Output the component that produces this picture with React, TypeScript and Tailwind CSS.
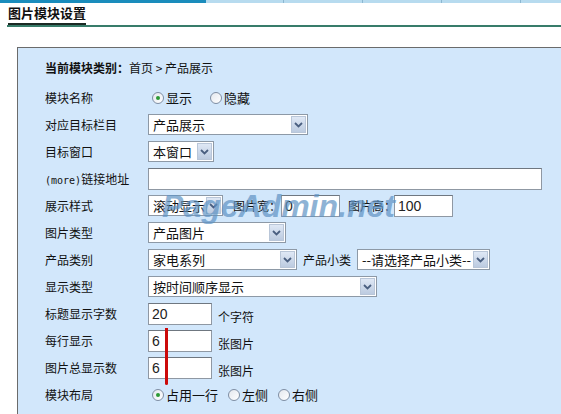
import type { ReactNode } from "react";

const cjk = "font-['Noto_Sans_CJK_SC',sans-serif]";

function Chevron() {
    return (
        <svg width="9" height="6" viewBox="0 0 9 6">
            <path d="M1 1l3.5 3.5L8 1" fill="none" stroke="#4a5f80" strokeWidth="1.8" />
        </svg>
    );
}

function Select({ width, value }: { width: number; value?: string }) {
    return (
        <div
            className="flex h-[21px] shrink-0 items-stretch border border-[#8d99a6] bg-white"
            style={{ width }}
        >
            <span className="flex-1 truncate pl-[4px] text-[13px] leading-[19px] text-[#111]">{value}</span>
            <span className="m-[1px] flex w-[15px] items-center justify-center border border-[#b9c6d8] bg-gradient-to-b from-[#dfe8f5] to-[#bccbe0]">
                <Chevron />
            </span>
        </div>
    );
}

function TextBox({ width, value }: { width: number; value?: string }) {
    return (
        <div
            className="h-[22px] shrink-0 border border-[#8f98a3] border-t-[#6f7780] bg-white pl-[3px] font-['Liberation_Sans',sans-serif] text-[14px] leading-[20px] text-[#222]"
            style={{ width }}
        >
            {value}
        </div>
    );
}

function Radio({ checked, label, className = "" }: { checked?: boolean; label: string; className?: string }) {
    return (
        <span className={`flex shrink-0 items-center whitespace-nowrap ${className}`}>
            <span className="flex size-[12px] items-center justify-center rounded-full border border-[#7f8ea3] bg-gradient-to-br from-[#e4e8ee] to-white">
                {checked && <span className="size-[4px] rounded-full bg-[#2c9a35]" />}
            </span>
            <span className="ml-[2px] text-[13px]">{label}</span>
        </span>
    );
}

function Note({ children, className = "" }: { children: ReactNode; className?: string }) {
    return <span className={`shrink-0 whitespace-nowrap text-[12px] ${className}`}>{children}</span>;
}

function Row({ label, children }: { label: ReactNode; children?: ReactNode }) {
    return (
        <div className="flex h-[27px] items-center">
            <div className="w-[103px] shrink-0 whitespace-nowrap text-[12px]">{label}</div>
            <div className="flex items-center">{children}</div>
        </div>
    );
}

export default function App() {
    return (
        <div className={`relative h-[414px] w-[561px] overflow-hidden bg-white text-[#111] ${cjk}`}>
            {/* tab strip */}
            <div className="flex h-[3px]">
                <div className="w-[206px] bg-[#1a8cbc]" />
                <div className="flex flex-1 bg-[#b7dbef]">
                    <div className="w-[78px] border-r border-[#8cb7d1]" />
                    <div className="w-[79px] border-r border-[#8cb7d1]" />
                    <div className="w-[79px] border-r border-[#8cb7d1]" />
                    <div className="w-[79px] border-r border-[#8cb7d1]" />
                </div>
            </div>

            <div className="ml-[7px] flex h-[24px] items-end border-b-2 border-[#387c6a] pl-[1px]">
                <span className="border-b-2 border-[#1b2a24] text-[13px] font-bold leading-[20px]">图片模块设置</span>
            </div>

            <div className="ml-[17px] mt-[20px] h-[367px] border-l border-t border-[#6b6b6b] bg-[#d2e7fb] pl-[27px] pt-[6px]">
                <div className="flex h-[27px] items-center whitespace-pre text-[12px]">
                    <b>当前模块类别：</b>
                    <span>首页 &gt; 产品展示</span>
                </div>
                <div className="mt-[3px]">
                    <Row label="模块名称">
                        <Radio checked label="显示" className="ml-[4px]" />
                        <Radio label="隐藏" className="ml-[18px]" />
                    </Row>
                    <Row label="对应目标栏目">
                        <Select width={160} value="产品展示" />
                    </Row>
                    <Row label="目标窗口">
                        <Select width={66} value="本窗口" />
                    </Row>
                    <Row label={<span><span className="font-['DejaVu_Sans_Mono',monospace] text-[10px]">(more)</span>链接地址</span>}>
                        <TextBox width={394} />
                    </Row>
                    <Row label="展示样式">
                        <Select width={75} value="滚动显示" />
                        <Note className="ml-[10px] w-[48px]">图片宽：</Note>
                        <TextBox width={59} value="0" />
                        <Note className="ml-[8px] w-[46px]">图片高：</Note>
                        <TextBox width={59} value="100" />
                    </Row>
                    <Row label="图片类型">
                        <Select width={138} value="产品图片" />
                    </Row>
                    <Row label="产品类别">
                        <Select width={149} value="家电系列" />
                        <Note className="ml-[6px] w-[54px]">产品小类</Note>
                        <Select width={133} value="--请选择产品小类--" />
                    </Row>
                    <Row label="显示类型">
                        <Select width={229} value="按时间顺序显示" />
                    </Row>
                    <Row label="标题显示字数">
                        <TextBox width={64} value="20" />
                        <Note className="ml-[6px] mt-[6px]">个字符</Note>
                    </Row>
                    <Row label="每行显示">
                        <TextBox width={64} value="6" />
                        <Note className="ml-[6px] mt-[6px]">张图片</Note>
                    </Row>
                    <Row label="图片总显示数">
                        <TextBox width={64} value="6" />
                        <Note className="ml-[6px] mt-[6px]">张图片</Note>
                    </Row>
                    <Row label="模块布局">
                        <Radio checked label="占用一行" className="ml-[4px]" />
                        <Radio label="左侧" className="ml-[10px]" />
                        <Radio label="右侧" className="ml-[10px]" />
                    </Row>
                </div>
            </div>

            {/* watermark */}
            <div className="pointer-events-none absolute left-[162px] top-[190px] font-['Liberation_Sans',sans-serif] text-[32px] font-bold italic leading-none text-[#5f93c4] opacity-70">
                PageAdmin.net
            </div>

            {/* red marker line */}
            <div className="absolute left-[165px] top-[328px] h-[57px] w-[3px] rounded-b-full bg-[#cc0a0a]" />
        </div>
    );
}
